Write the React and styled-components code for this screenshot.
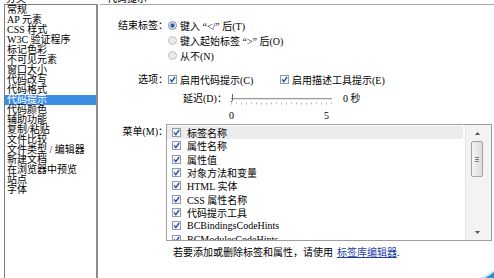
import React from "react";
import styled, { createGlobalStyle } from "styled-components";

const GlobalStyle = createGlobalStyle`
  html, body {
    margin: 0;
    padding: 0;
    background: #fff;
    overflow: hidden;
  }
  body {
    width: 494px;
    height: 278px;
  }
`;

const FONT = `"Liberation Serif", "Noto Sans CJK SC", serif`;

const Page = styled.div`
  position: relative;
  display: flex;
  width: 494px;
  height: 284px;
  margin-top: -6px;
  font-family: ${FONT};
  font-size: 10px;
  color: #000;
  overflow: hidden;
`;

// left category list
const Sidebar = styled.div`
  width: 100px;
  box-sizing: border-box;
  padding-left: 4px;
  display: flex;
  flex-direction: column;
  flex-shrink: 0;
`;

const SideTitle = styled.div`
  height: 10px;
  line-height: 10px;
  padding-left: 2px;
`;

const CategoryList = styled.div`
  flex: 1;
  width: 94px;
  box-sizing: border-box;
  border: 1px solid #7d7d7d;
  border-right: 2px solid #8c8c8c;
  border-bottom: none;
`;

const Category = styled.div`
  height: 10px;
  line-height: 10px;
  padding-left: 2px;
  white-space: nowrap;
  background: ${(p) => (p.$active ? "#3c8ee4" : "transparent")};
  color: ${(p) => (p.$active ? "#fff" : "#000")};
`;

// right pane
const Main = styled.div`
  flex: 1;
  display: flex;
  flex-direction: column;
`;

const MainHeader = styled.div`
  height: 10px;
  line-height: 10px;
  padding-left: 7px;
  border-bottom: 1px solid #a9a9a9;
`;

const Form = styled.div`
  padding-top: 13px;
  display: flex;
  flex-direction: column;
`;

const FieldRow = styled.div`
  display: flex;
  align-items: flex-start;
  margin-top: ${(p) => p.$gap || 0}px;
`;

const FieldLabel = styled.div`
  width: 68px;
  flex-shrink: 0;
  text-align: right;
  line-height: ${(p) => p.$lh || 15}px;
  padding-top: ${(p) => p.$pt || 0}px;
  white-space: nowrap;
`;

const RadioGroup = styled.div`
  display: flex;
  flex-direction: column;
`;

const Option = styled.label`
  display: flex;
  align-items: center;
  height: 15px;
  gap: 3px;
  white-space: nowrap;
  min-width: ${(p) => p.$width || 0}px;
`;

const ControlSvg = styled.svg`
  width: 9px;
  height: 9px;
  flex-shrink: 0;
  display: block;
`;

const DelayRow = styled.div`
  display: flex;
  align-items: flex-start;
  padding-left: 83px;
  margin-top: 4px;
`;

const DelayLabel = styled.div`
  line-height: 15px;
  white-space: nowrap;
`;

const SliderBox = styled.div`
  display: flex;
  flex-direction: column;
  margin-left: 1px;
`;

const SliderSvg = styled.svg`
  width: 106px;
  height: 15px;
  display: block;
`;

const Scale = styled.div`
  display: flex;
  justify-content: space-between;
  width: 100px;
  padding-left: 1px;
  margin-top: 4px;
  line-height: 12px;
`;

const DelayValue = styled.div`
  line-height: 15px;
  margin-left: 9px;
  white-space: nowrap;
`;

const MenuBox = styled.div`
  margin-left: -2px;
  width: 326px;
  height: 117px;
  box-sizing: border-box;
  border: 1px solid #9e9e9e;
  display: flex;
  overflow: hidden;
`;

const MenuRows = styled.div`
  flex: 1;
  padding-top: 1px;
  overflow: hidden;
`;

const MenuRow = styled.div`
  display: flex;
  align-items: center;
  gap: 6px;
  height: 13.3px;
  padding-left: 5px;
  margin-right: 2px;
  white-space: nowrap;
  background: ${(p) => (p.$selected ? "#ececec" : "transparent")};
`;

const Scrollbar = styled.div`
  width: 25px;
  flex-shrink: 0;
  background: #f3f3f3;
  border-left: 1px solid #e4e4e4;
  display: flex;
  flex-direction: column;
  align-items: center;
`;

const ArrowBtn = styled.div`
  height: 16px;
  display: flex;
  align-items: center;
  justify-content: center;
  margin-right: 3px;
`;

const Thumb = styled.div`
  width: 12px;
  height: 36px;
  box-sizing: border-box;
  margin-right: 3px;
  border: 1px solid #a3a3a3;
  border-radius: 2px;
  background: linear-gradient(to right, #f4f4f4, #dcdcdc);
  display: flex;
  flex-direction: column;
  align-items: center;
  justify-content: center;
  gap: 1px;
`;

const Grip = styled.span`
  width: 4px;
  height: 1px;
  background: #7a7a7a;
`;

const Spacer = styled.div`
  flex: 1;
`;

const Hint = styled.div`
  padding-left: 73px;
  margin-top: 6px;
  line-height: 12px;
  white-space: nowrap;
`;

const LibLink = styled.a`
  color: #1d3fa6;
  text-decoration: underline;
  margin-left: 4px;
`;

const Swoosh = styled.svg`
  position: absolute;
  right: 0;
  bottom: 0;
  width: 18px;
  height: 9px;
`;

const categories = [
  "常规",
  "AP 元素",
  "CSS 样式",
  "W3C 验证程序",
  "标记色彩",
  "不可见元素",
  "窗口大小",
  "代码改写",
  "代码格式",
  "代码提示",
  "代码颜色",
  "辅助功能",
  "复制/粘贴",
  "文件比较",
  "文件类型 / 编辑器",
  "新建文档",
  "在浏览器中预览",
  "站点",
  "字体",
];

const menuItems = [
  "标签名称",
  "属性名称",
  "属性值",
  "对象方法和变量",
  "HTML 实体",
  "CSS 属性名称",
  "代码提示工具",
  "BCBindingsCodeHints",
  "BCModulesCodeHints",
];

function Radio({ checked }) {
  return (
    <ControlSvg viewBox="0 0 9 9">
      <circle
        cx="4.5"
        cy="4.5"
        r="4"
        fill={checked ? "#f2f4f7" : "#e9e9e9"}
        stroke={checked ? "#7f8a97" : "#c2c2c2"}
      />
      {checked && <circle cx="4.5" cy="4.5" r="2.2" fill="#2c5fb5" />}
    </ControlSvg>
  );
}

function Check() {
  return (
    <ControlSvg viewBox="0 0 9 9">
      <rect x="0.5" y="0.5" width="8" height="8" fill="#f5f7fa" stroke="#8d9bb1" />
      <path d="M2 4.4 L3.8 6.6 L7.1 2" fill="none" stroke="#2b4f9f" strokeWidth="1.4" />
    </ControlSvg>
  );
}

function Slider() {
  const ticks = [];
  for (let i = 0; i <= 20; i++) {
    const x = 3.5 + i * 5;
    ticks.push(<line key={i} x1={x} y1="11.5" x2={x} y2="13.5" stroke="#b8b8b8" />);
  }
  return (
    <SliderSvg viewBox="0 0 106 15">
      <line x1="3" y1="7.5" x2="104" y2="7.5" stroke="#9c9c9c" />
      <line x1="3" y1="8.5" x2="104" y2="8.5" stroke="#e2e2e2" />
      <path d="M4.5 3 V9.5 Q4.5 11 2.5 10.5" fill="none" stroke="#666" />
      {ticks}
    </SliderSvg>
  );
}

export default function App() {
  return (
    <>
      <GlobalStyle />
      <Page>
        <Sidebar>
          <SideTitle>分类</SideTitle>
          <CategoryList>
            {categories.map((c) => (
              <Category key={c} $active={c === "代码提示"}>
                {c}
              </Category>
            ))}
          </CategoryList>
        </Sidebar>

        <Main>
          <MainHeader>代码提示</MainHeader>
          <Form>
            <FieldRow>
              <FieldLabel>结束标签：</FieldLabel>
              <RadioGroup>
                <Option>
                  <Radio checked />
                  键入 “&lt;/” 后(T)
                </Option>
                <Option>
                  <Radio />
                  键入起始标签 “&gt;” 后(O)
                </Option>
                <Option>
                  <Radio />
                  从不(N)
                </Option>
              </RadioGroup>
            </FieldRow>

            <FieldRow $gap={9}>
              <FieldLabel>选项：</FieldLabel>
              <Option $width={112}>
                <Check />
                启用代码提示(C)
              </Option>
              <Option>
                <Check />
                启用描述工具提示(E)
              </Option>
            </FieldRow>

            <DelayRow>
              <DelayLabel>延迟(D)：</DelayLabel>
              <SliderBox>
                <Slider />
                <Scale>
                  <span>0</span>
                  <span>5</span>
                </Scale>
              </SliderBox>
              <DelayValue>0 秒</DelayValue>
            </DelayRow>

            <FieldRow $gap={2}>
              <FieldLabel $lh={14} $pt={1}>
                菜单(M)：
              </FieldLabel>
              <MenuBox>
                <MenuRows>
                  {menuItems.map((m, i) => (
                    <MenuRow key={m} $selected={i === 0}>
                      <Check />
                      {m}
                    </MenuRow>
                  ))}
                </MenuRows>
                <Scrollbar>
                  <ArrowBtn>
                    <svg width="5" height="3" viewBox="0 0 5 3">
                      <path d="M0 3 L2.5 0 L5 3 Z" fill="#555" />
                    </svg>
                  </ArrowBtn>
                  <Thumb>
                    <Grip />
                    <Grip />
                    <Grip />
                  </Thumb>
                  <Spacer />
                  <ArrowBtn>
                    <svg width="5" height="3" viewBox="0 0 5 3">
                      <path d="M0 0 L2.5 3 L5 0 Z" fill="#555" />
                    </svg>
                  </ArrowBtn>
                </Scrollbar>
              </MenuBox>
            </FieldRow>

            <Hint>
              若要添加或删除标签和属性，请使用
              <LibLink>标签库编辑器</LibLink>.
            </Hint>
          </Form>
        </Main>

        <Swoosh viewBox="0 0 18 9">
          <path d="M2 9 Q10 7 18 1 L18 9 Z" fill="#cfeaf7" />
          <path d="M9 9 Q14 6.5 18 3 L18 9 Z" fill="#2e8fd3" />
        </Swoosh>
      </Page>
    </>
  );
}
